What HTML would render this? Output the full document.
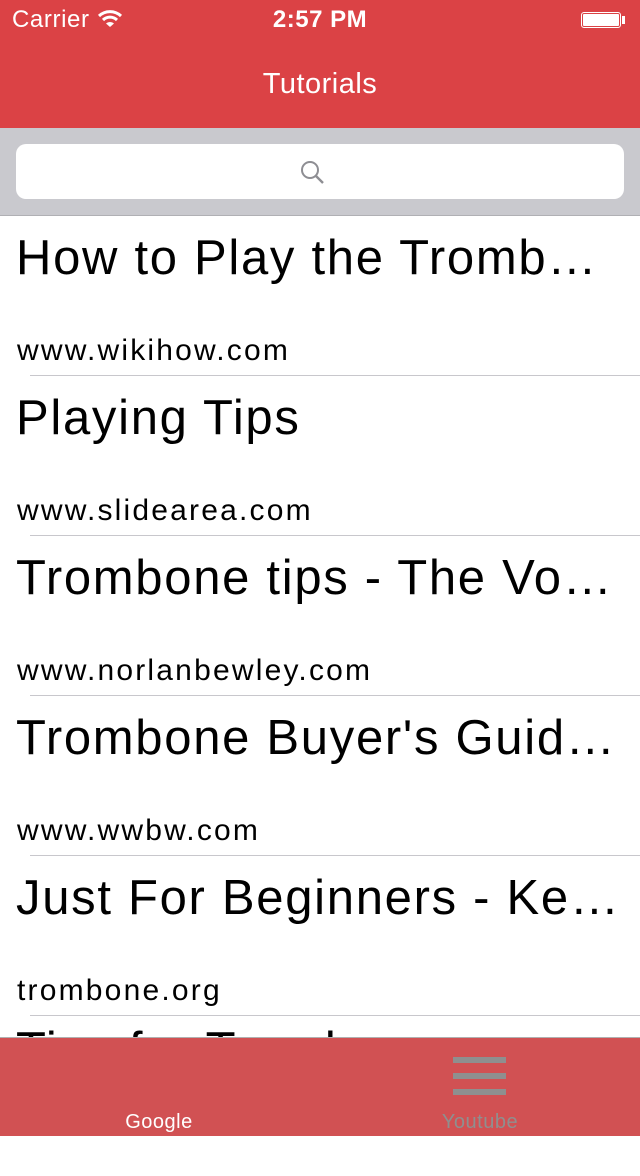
<!DOCTYPE html>
<html><head><meta charset="utf-8"><style>
body{margin:0;width:640px;height:1136px;overflow:hidden;font-family:"Liberation Sans",sans-serif;background:#fff;position:relative}
.top{position:absolute;left:0;top:0;width:640px;height:128px;background:#db4245;color:#fff}
.sb{position:absolute;top:6px;font-size:24px}
.title{position:absolute;top:68px;width:640px;text-align:center;font-size:29px;letter-spacing:0.5px}
.search{position:absolute;top:128px;left:0;width:640px;height:87px;background:#c9c9ce;border-bottom:1px solid #b0b0b4}
.field{position:absolute;left:16px;top:16px;width:608px;height:55px;background:#fff;border-radius:10px}
.row{position:absolute;left:0;width:640px;height:160px}
.t{position:absolute;left:16px;top:14px;font-size:49px;white-space:nowrap;letter-spacing:1.7px;color:#000}
.u{position:absolute;left:17px;top:118px;font-size:30px;letter-spacing:2.2px;color:#000}
.sep{position:absolute;left:30px;right:0;bottom:0;height:1px;background:#c8c7cc}
.tab{position:absolute;left:0;top:1037px;width:640px;height:99px;background:#d15153;border-top:1px solid #b0b0b0;box-sizing:border-box}
.tl{position:absolute;top:73px;font-size:20px;letter-spacing:0.5px}
</style></head><body>
<div class="row" style="top:216px"><div class="t">How to Play the Tromb…</div><div class="u">www.wikihow.com</div><div class="sep"></div></div>
<div class="row" style="top:376px"><div class="t">Playing Tips</div><div class="u">www.slidearea.com</div><div class="sep"></div></div>
<div class="row" style="top:536px"><div class="t">Trombone tips - The Vo…</div><div class="u">www.norlanbewley.com</div><div class="sep"></div></div>
<div class="row" style="top:696px"><div class="t">Trombone Buyer's Guid…</div><div class="u">www.wwbw.com</div><div class="sep"></div></div>
<div class="row" style="top:856px"><div class="t">Just For Beginners - Ke…</div><div class="u">trombone.org</div><div class="sep"></div></div>
<div class="row" style="top:1016px"><div class="t" style="top:6px">Tips for Trombone</div></div>
<div class="top">
<div class="sb" style="left:12px;letter-spacing:0.6px">Carrier <svg width="26" height="20" viewBox="0 0 26 20" style="vertical-align:-1px"><path d="M2 8a16 16 0 0 1 22 0M6 12a10 10 0 0 1 14 0" stroke="#fff" stroke-width="3" fill="none"/><path d="M9 15.5a6 6 0 0 1 8 0L13 19z" fill="#fff"/></svg></div>
<div class="sb" style="left:0;width:640px;text-align:center;font-weight:bold;letter-spacing:0.5px">2:57 PM</div>
<div style="position:absolute;left:581px;top:12px;width:40px;height:16px;border:1px solid #fff;border-radius:3px;padding:1px;box-sizing:border-box"><div style="width:100%;height:100%;background:#fff;border-radius:1px"></div></div>
<div style="position:absolute;left:622px;top:16px;width:3px;height:8px;background:#fff"></div>
<div class="title">Tutorials</div>
</div>
<div class="search"><div class="field"><svg style="position:absolute;left:284px;top:16px" width="26" height="26" viewBox="0 0 26 26"><circle cx="10" cy="10" r="8" stroke="#8e8e93" stroke-width="2" fill="none"/><path d="M16 16l7 7" stroke="#8e8e93" stroke-width="2.4"/></svg></div></div>
<div class="tab">
<div class="tl" style="left:0;width:318px;text-align:center;color:#fff">Google</div>
<div style="position:absolute;left:453px;top:19px;width:53px;height:6px;background:#8f8f8f"></div>
<div style="position:absolute;left:453px;top:35px;width:53px;height:6px;background:#8f8f8f"></div>
<div style="position:absolute;left:453px;top:51px;width:53px;height:6px;background:#8f8f8f"></div>
<div class="tl" style="left:320px;width:320px;text-align:center;color:#8f8f8f">Youtube</div>
</div>
</body></html>
